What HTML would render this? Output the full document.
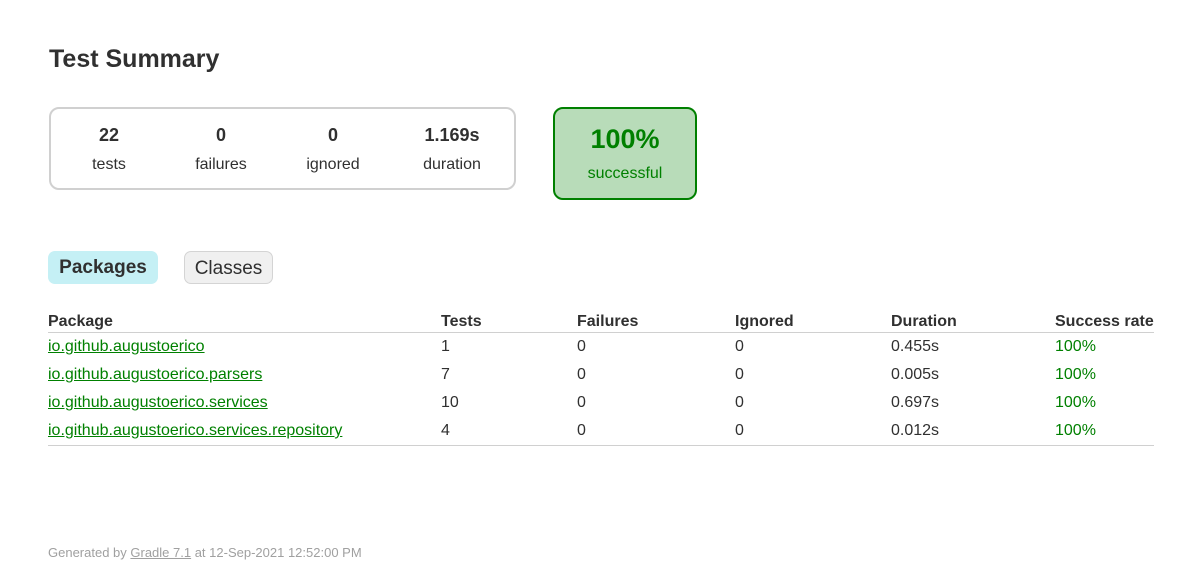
<!DOCTYPE html>
<html><head><meta charset="utf-8"><style>
body{margin:0;width:1193px;height:575px;background:#fff;font-family:"Liberation Sans",Arial,sans-serif;color:#303030;font-size:16px;position:relative;overflow:hidden}
.a{position:absolute;white-space:nowrap}
h1{position:absolute;left:49px;top:45px;margin:0;font-size:25px;font-weight:bold;color:#303030}
.sum{position:absolute;left:49px;top:107px;width:463px;height:79px;border:2px solid #d0d0d0;border-radius:10px}
.c{position:absolute;text-align:center;width:120px}
.n{font-weight:bold;font-size:18px}
.succ{position:absolute;left:553px;top:107px;width:140px;height:89px;border:2px solid #008000;border-radius:10px;background:#b8dcb9;color:#008000;text-align:center}
.tab{position:absolute;top:251px;height:33px;line-height:33px;border-radius:7px;text-align:center;font-size:19px}
table{position:absolute;left:48px;top:310px;width:1106px;border-collapse:collapse;font-size:16px}
th{text-align:left;font-weight:bold;padding:2px 0 1px;height:19px;border-bottom:1px solid #d0d0d0}
td{height:28px;padding:0;vertical-align:middle}
tr:last-child td{border-bottom:1px solid #d0d0d0}
a{color:#008000;text-decoration:underline}
.g{color:#008000}
</style></head><body>
<h1>Test Summary</h1>
<div class="sum">
<div class="c n" style="left:-2px;top:16px">22</div><div class="c" style="left:-2px;top:47px">tests</div>
<div class="c n" style="left:110px;top:16px">0</div><div class="c" style="left:110px;top:47px">failures</div>
<div class="c n" style="left:222px;top:16px">0</div><div class="c" style="left:222px;top:47px">ignored</div>
<div class="c n" style="left:341px;top:16px">1.169s</div><div class="c" style="left:341px;top:47px">duration</div>
</div>
<div class="succ"><div style="font-size:27px;font-weight:bold;margin-top:15px">100%</div><div style="margin-top:10px">successful</div></div>
<div class="tab" style="left:48px;width:110px;background:#c5f0f5;font-weight:bold">Packages</div>
<div class="tab" style="left:184px;width:87px;height:31px;line-height:33px;background:#f0f0f0;border:1px solid #d4d4d4">Classes</div>
<table>
<colgroup><col style="width:393px"><col style="width:136px"><col style="width:158px"><col style="width:156px"><col style="width:164px"><col></colgroup>
<tr><th>Package</th><th>Tests</th><th>Failures</th><th>Ignored</th><th>Duration</th><th>Success rate</th></tr>
<tr><td><a>io.github.augustoerico</a></td><td>1</td><td>0</td><td>0</td><td>0.455s</td><td class="g">100%</td></tr>
<tr><td><a>io.github.augustoerico.parsers</a></td><td>7</td><td>0</td><td>0</td><td>0.005s</td><td class="g">100%</td></tr>
<tr><td><a>io.github.augustoerico.services</a></td><td>10</td><td>0</td><td>0</td><td>0.697s</td><td class="g">100%</td></tr>
<tr><td><a>io.github.augustoerico.services.repository</a></td><td>4</td><td>0</td><td>0</td><td>0.012s</td><td class="g">100%</td></tr>
</table>
<div class="a" style="left:48px;top:545px;font-size:13px;color:#a0a0a0">Generated by <span style="text-decoration:underline">Gradle 7.1</span> at 12-Sep-2021 12:52:00 PM</div>
</body></html>
